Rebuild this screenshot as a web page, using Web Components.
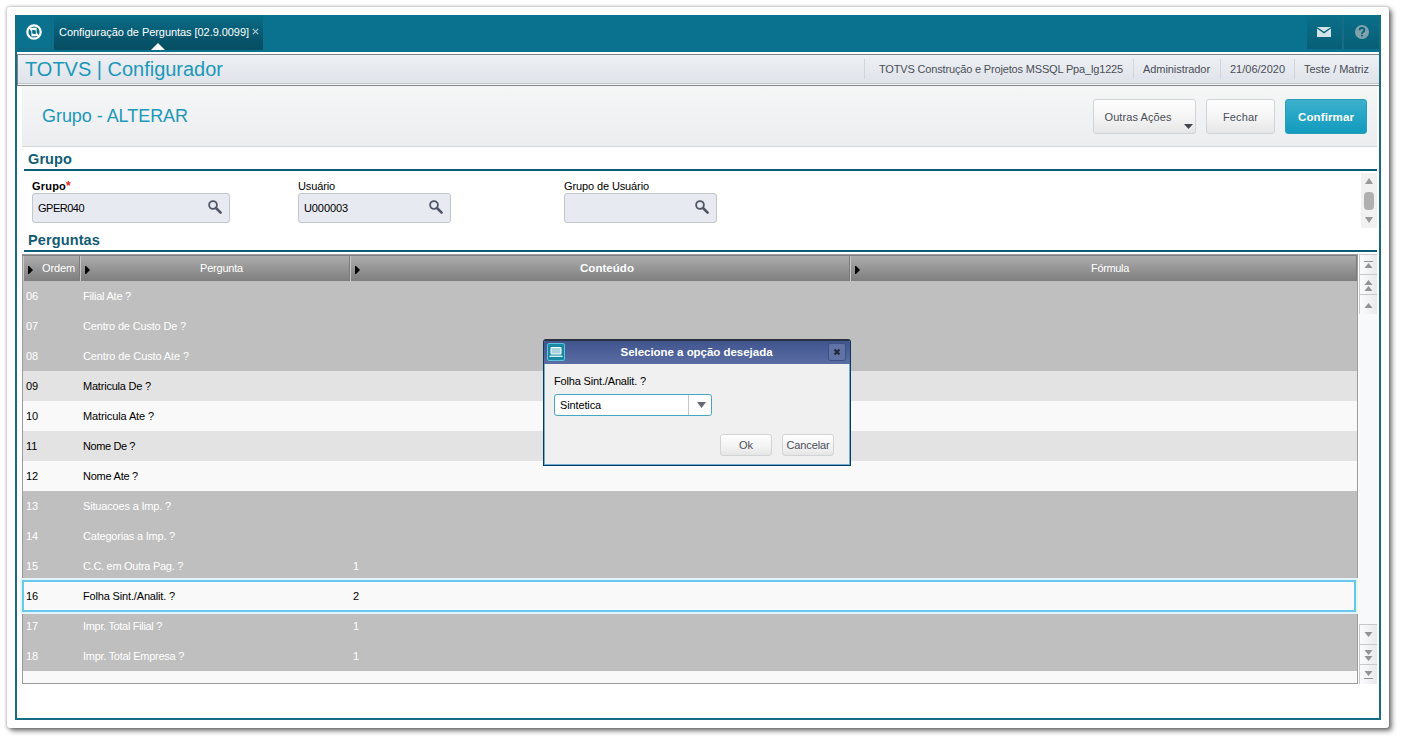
<!DOCTYPE html>
<html lang="pt-BR">
<head>
<meta charset="utf-8">
<title>TOTVS | Configurador</title>
<style>
    html, body {
        margin: 0;
        width: 1402px;
        height: 741px;
        overflow: hidden;
        background: #fff;
    }
    body {
        font: 11px/14px "Liberation Sans", Arial, sans-serif;
        color: #000;
    }
</style>
</head>
<body>
<app-window></app-window>

<script>
// -----------------------------------------
// 1. Screen data
// -----------------------------------------
const AppState = {
    session: [
        { text: 'TOTVS Construção e Projetos MSSQL Ppa_lg1225', run: 244, pad: 14, box: 269 },
        { text: 'Administrador', run: 67, pad: 9, box: 87 },
        { text: '21/06/2020', run: 55, pad: 9, box: 74 },
        { text: 'Teste / Matriz', run: 65, pad: 9, box: 85 }
    ],
    fields: [
        { label: 'Grupo', run: 34, value: 'GPER040', valueRun: 46, width: 198, required: true },
        { label: 'Usuário', run: 37, value: 'U000003', valueRun: 44, width: 153 },
        { label: 'Grupo de Usuário', run: 85, value: '', width: 153 }
    ],
    columns: [
        { label: 'Ordem', run: 33 },
        { label: 'Pergunta', run: 43 },
        { label: 'Conteúdo', run: 54, bold: true },
        { label: 'Fórmula', run: 38 }
    ],
    rows: [
        { order: '06', text: 'Filial Ate ?', run: 48, state: 'off' },
        { order: '07', text: 'Centro de Custo De ?', run: 103, state: 'off' },
        { order: '08', text: 'Centro de Custo Ate ?', run: 106, state: 'off' },
        { order: '09', text: 'Matricula De ?', run: 68, state: 'odd' },
        { order: '10', text: 'Matricula Ate ?', run: 71, state: 'even' },
        { order: '11', text: 'Nome De ?', run: 52, state: 'odd' },
        { order: '12', text: 'Nome Ate ?', run: 55, state: 'even' },
        { order: '13', text: 'Situacoes a Imp. ?', run: 88, state: 'off' },
        { order: '14', text: 'Categorias a Imp. ?', run: 92, state: 'off' },
        { order: '15', text: 'C.C. em Outra Pag. ?', run: 100, value: '1', state: 'off' },
        { order: '16', text: 'Folha Sint./Analit. ?', run: 92, value: '2', state: 'selected' },
        { order: '17', text: 'Impr. Total Filial ?', run: 79, value: '1', state: 'off' },
        { order: '18', text: 'Impr. Total Empresa ?', run: 101, value: '1', state: 'off' }
    ]
};

/** Attaches an open shadow root with the given markup. */
const render = (host, html) => {
    host.attachShadow({ mode: 'open' }).innerHTML = html;
};

// -----------------------------------------
// 2. Small parts
// -----------------------------------------

/** One line of text, tracked so that its run takes exactly `run` pixels. */
class TextRun extends HTMLElement {
    constructor() {
        super();
        render(this, `
            <style>
                :host { display: inline-block; white-space: nowrap; vertical-align: top; }
                span { display: inline-block; vertical-align: top; }
            </style>
            <span><slot></slot></span>
        `);
    }

    connectedCallback() {
        requestAnimationFrame(() => this.fit());
        this.fit();
    }

    fit() {
        const run = Number(this.getAttribute('run'));
        const span = this.shadowRoot.querySelector('span');
        span.style.letterSpacing = '0';
        const natural = span.getBoundingClientRect().width;
        const count = this.textContent.length;
        if (!run || !natural || !count) return;
        span.style.letterSpacing = `${(run - natural) / count}px`;
        this.style.width = `${run}px`;
    }
}

class UiButton extends HTMLElement {
    constructor() {
        super();
        render(this, `
            <style>
                :host {
                    display: flex;
                    align-items: center;
                    justify-content: center;
                    box-sizing: border-box;
                    border: 1px solid #d2d3d5;
                    border-radius: 3px;
                    background: linear-gradient(#fefefe, #f4f4f4 55%, #e6e6e7);
                    color: #4b4e57;
                    white-space: nowrap;
                }
                :host([primary]) {
                    border-color: #2a9dbb;
                    background: linear-gradient(#3cb0cd, #25a5c5 50%, #129bbd);
                    color: #fff;
                    font-size: 11.5px;
                    font-weight: bold;
                }
            </style>
            <slot></slot>
        `);
    }
}

class SearchField extends HTMLElement {
    connectedCallback() {
        const label = this.getAttribute('label');
        const required = this.hasAttribute('required');
        const value = this.getAttribute('value');
        render(this, `
            <style>
                :host { display: block; line-height: 14px; }
                .label { height: 14px; display: flex; }
                .label.required { font-weight: bold; }
                i { color: #e2231a; font-style: normal; font-size: 12px; }
                .box {
                    box-sizing: border-box;
                    height: 30px;
                    display: flex;
                    align-items: center;
                    justify-content: space-between;
                    padding: 0 7px 0 5px;
                    border: 1px solid #c3c6cb;
                    border-radius: 3px;
                    background: #e7eaf1;
                }
                svg { display: block; margin-bottom: 2px; }
            </style>
            <div class="label ${required ? 'required' : ''}"><text-run run="${this.getAttribute('run')}">${label}</text-run>${required ? '<i>*</i>' : ''}</div>
            <div class="box">
                <text-run run="${this.getAttribute('value-run')}">${value}</text-run>
                <svg width="14" height="14" viewBox="0 0 14 14" fill="none" stroke="#4f5665">
                    <circle cx="5" cy="5" r="3.9" stroke-width="1.8"/>
                    <path d="M8 8L12.6 12.6" stroke-width="2.6" stroke-linecap="round"/>
                </svg>
            </div>
        `);
    }
}

class SectionTitle extends HTMLElement {
    constructor() {
        super();
        render(this, `
            <style>
                :host {
                    display: block;
                    box-sizing: border-box;
                    margin-left: 2px;
                    padding-left: 4px;
                    border-bottom: 2px solid #0b5c74;
                    color: #115c74;
                    font-size: 14.5px;
                    font-weight: bold;
                    line-height: 18px;
                }
            </style>
            <slot></slot>
        `);
    }
}

// -----------------------------------------
// 3. Header bars
// -----------------------------------------
class TopBar extends HTMLElement {
    constructor() {
        super();
        render(this, `
            <style>
                :host {
                    display: flex;
                    height: 35px;
                    padding-bottom: 2px;
                    background: #0a728f;
                    color: #fff;
                }
                svg { display: block; }
                .home, .tool {
                    box-sizing: border-box;
                    height: 34px;
                    display: flex;
                    align-items: center;
                    justify-content: center;
                }
                .home { width: 35px; border-right: 1px solid #176781; border-bottom: 1px solid #176781; }
                .tab {
                    position: relative;
                    box-sizing: border-box;
                    width: 209px;
                    height: 35px;
                    margin-left: 2px;
                    padding: 10px 0 0 5px;
                    display: flex;
                    gap: 3px;
                    background: linear-gradient(#0a6e89, #06546b 70%, #064d61);
                }
                .close { margin-top: 3px; }
                /* pointer over the lower edge of the active tab */
                .mark { position: absolute; left: 97px; bottom: 0; }
                .tools { margin-left: auto; display: flex; gap: 1px; }
                .tool { width: 36px; padding-right: 2px; background: linear-gradient(#0a6f8a, #075e76); border-right: 1px solid #24677a; }
                .tool:last-child { width: 35px; padding-right: 0; border-right: 0; }
            </style>
            <div class="home">
                <svg width="16" height="16" viewBox="0 0 16 16">
                    <circle cx="8" cy="8" r="6.7" fill="none" stroke="#fff" stroke-width="2.2"/>
                    <path d="M2.5 3.8H10.6V8.6L13.5 12.2H5.4V7.4Z" fill="#fff"/>
                    <path d="M6.2 5.8L9.8 6.4V10.2L6.2 9.6Z" fill="#0a6c87"/>
                </svg>
            </div>
            <div class="tab">
                <text-run run="190">Configuração de Perguntas [02.9.0099]</text-run>
                <svg class="close" width="7" height="7" viewBox="0 0 7 7" stroke="#b4cdd4" stroke-width="1.1"><path d="M.8 .8L6.2 6.2M6.2 .8L.8 6.2"/></svg>
                <svg class="mark" width="14" height="7"><path d="M7 0L14 7H0Z" fill="#fff"/></svg>
            </div>
            <div class="tools">
                <div class="tool">
                    <svg width="14" height="10" viewBox="0 0 14 10">
                        <rect width="14" height="10" fill="#d3e3e7"/>
                        <path d="M0 .7L7 5.6L14 .7" fill="none" stroke="#0a647d" stroke-width="1.3"/>
                    </svg>
                </div>
                <div class="tool">
                    <svg width="14" height="14" viewBox="0 0 14 14">
                        <circle cx="7" cy="7" r="7" fill="#82a2ab"/>
                        <path d="M4.6 5.3C4.6 2.2 9.5 2.3 9.4 5.1C9.3 6.8 7 6.7 7 8.8M7 9.8V11.6" fill="none" stroke="#07627a" stroke-width="1.8"/>
                    </svg>
                </div>
            </div>
        `);
    }
}

class TitleBar extends HTMLElement {
    constructor() {
        super();
        const items = AppState.session.map(item => `
            <div class="item" style="width:${item.box}px;padding-left:${item.pad}px"><text-run run="${item.run}">${item.text}</text-run></div>`).join('');
        render(this, `
            <style>
                :host {
                    box-sizing: border-box;
                    display: flex;
                    justify-content: space-between;
                    height: 32px;
                    margin-top: 2px;
                    border: 1px solid #7f868b;
                    border-right: 0;
                    background: linear-gradient(#edf0f4, #dfe4ea 28px, #bfc4c9 28px, #bfc4c9 29px, #f7f8fa 29px);
                    color: #4b4e57;
                }
                .name { margin: 2px 0 0 7px; font-size: 20px; line-height: 24px; color: #1c98ba; }
                .session { display: flex; padding-top: 4px; }
                .item {
                    box-sizing: border-box;
                    height: 20px;
                    line-height: 20px;
                    border-left: 1px solid #d0d5db;
                }
            </style>
            <div class="name"><text-run run="198">TOTVS | Configurador</text-run></div>
            <div class="session">${items}</div>
        `);
    }
}

class ActionBar extends HTMLElement {
    constructor() {
        super();
        render(this, `
            <style>
                :host {
                    box-sizing: border-box;
                    display: flex;
                    justify-content: space-between;
                    height: 61px;
                    padding: 13px 10px 0 20px;
                    border-bottom: 1px solid #d6d7d8;
                    background: linear-gradient(#f5f7f7, #ebedef);
                }
                .name { margin-top: 6px; font-size: 18px; line-height: 22px; color: #1c98ba; }
                .buttons { display: flex; gap: 10px; }
                ui-button { height: 35px; }
                .more { width: 103px; position: relative; padding-right: 13px; }
                /* menu arrow in the button's lower corner */
                .more svg { position: absolute; right: 2px; bottom: 4px; }
            </style>
            <div class="name"><text-run run="146">Grupo - ALTERAR</text-run></div>
            <div class="buttons">
                <ui-button class="more"><text-run run="67">Outras Ações</text-run><svg width="9" height="5"><path d="M0 0H9L4.5 5Z" fill="#414552"/></svg></ui-button>
                <ui-button style="width:69px"><text-run run="35">Fechar</text-run></ui-button>
                <ui-button primary style="width:82px"><text-run run="56">Confirmar</text-run></ui-button>
            </div>
        `);
    }
}

// -----------------------------------------
// 4. Content
// -----------------------------------------
class GroupForm extends HTMLElement {
    constructor() {
        super();
        const fields = AppState.fields.map(f => `
            <search-field style="width:${f.width}px" label="${f.label}" run="${f.run}" value="${f.value}" value-run="${f.valueRun || 0}" ${f.required ? 'required' : ''}></search-field>`).join('');
        render(this, `
            <style>
                :host { display: flex; justify-content: space-between; height: 60px; }
                .fields { display: grid; grid-template-columns: 266px 266px 266px; padding: 8px 0 0 10px; align-content: start; }
                .scroll {
                    box-sizing: border-box;
                    width: 16px;
                    height: 55px;
                    margin-top: 2px;
                    padding: 5px 0;
                    display: flex;
                    flex-direction: column;
                    align-items: center;
                    justify-content: space-between;
                    background: #f1f1f2;
                }
                .thumb { width: 10px; height: 18px; border-radius: 4px; background: #b0b0b0; }
            </style>
            <div class="fields">${fields}</div>
            <div class="scroll">
                <svg width="8" height="6"><path d="M4 0L8 6H0Z" fill="#999"/></svg>
                <div class="thumb"></div>
                <svg width="8" height="6"><path d="M0 0H8L4 6Z" fill="#999"/></svg>
            </div>
        `);
    }
}

class QuestionGrid extends HTMLElement {
    constructor() {
        super();
        const head = AppState.columns.map(c => `
            <div class="th ${c.bold ? 'bold' : ''}"><svg width="5" height="8"><path d="M0 0H1L5 4L1 8H0Z" fill="#000"/></svg><span><text-run run="${c.run}">${c.label}</text-run></span></div>`).join('');
        const rows = AppState.rows.map(r => `
            <div class="tr ${r.state}"><div>${r.order}</div><div><text-run run="${r.run}">${r.text}</text-run></div><div>${r.value || ''}</div><div></div></div>`).join('');
        render(this, `
            <style>
                :host {
                    display: block;
                    box-sizing: border-box;
                    width: 1336px;
                    height: 430px;
                    border: 1px solid #999b9d;
                    background: #f9f9f9;
                }
                .thead, .tr { display: grid; grid-template-columns: 57px 270px 500px 507px; }
                .thead {
                    box-sizing: border-box;
                    height: 26px;
                    border-top: 1px solid #818181;
                    background: linear-gradient(#acacac, #7e7e7e);
                    color: #fff;
                }
                .th {
                    box-sizing: border-box;
                    display: flex;
                    align-items: center;
                    padding-left: 4px;
                    border-left: 1px solid #c6c6c6;
                    border-right: 1px solid #7b7b7b;
                }
                .th svg { flex: none; margin-top: 3px; }
                .th span { flex: 1; text-align: center; padding: 0 0 2px 4px; }
                .th:first-child span { padding-left: 5px; }
                .bold { font-size: 11.5px; font-weight: bold; }
                .bold span { padding-left: 5px; }
                .tr { height: 30px; line-height: 30px; }
                .tr div { padding-left: 3px; }
                .off { background: #bfbfbf; color: #fff; }
                .odd { background: #e3e3e3; }
                .even { background: #f9f9f9; }
                .selected {
                    position: relative;
                    margin-right: 2px;
                    background: #f9f9f9;
                    outline: 2px solid #67c9ea;
                    box-shadow: 0 0 0 3px #e4f5fb, inset 0 0 0 1px #d3f1fa;
                    outline-offset: -1px;
                }
            </style>
            <div class="thead">${head}</div>
            ${rows}
        `);
    }
}

/** Navigation strip at the right of the grid. */
class GridNav extends HTMLElement {
    constructor() {
        super();
        const up = y => `<path d="M9.5 ${y}L13.5 ${y + 5}H5.5Z"/>`;
        const down = y => `<path d="M5.5 ${y}H13.5L9.5 ${y + 5}Z"/>`;
        const key = shapes => `<div class="key"><svg width="18" height="19" fill="#929395">${shapes}</svg></div>`;
        render(this, `
            <style>
                :host {
                    display: flex;
                    flex-direction: column;
                    justify-content: space-between;
                    width: 18px;
                    height: 430px;
                    margin-left: 1px;
                    background: #f8f9fb;
                }
                .key {
                    box-sizing: border-box;
                    height: 20px;
                    border-top: 1px solid #c8c9cc;
                    border-left: 1px solid #c8c9cc;
                    background: linear-gradient(90deg, #fbfbfc, #e9eaec);
                }
                svg { display: block; margin-left: -1px; }
            </style>
            <div>
                ${key('<path d="M5 6h9v1h-9z"/>' + up(8))}
                ${key(up(5) + up(11))}
                ${key(up(8))}
            </div>
            <div>
                ${key(down(7))}
                ${key(down(5) + down(11))}
                ${key(down(6) + '<path d="M5 13h9v1h-9z"/>')}
            </div>
        `);
    }
}

class OptionDialog extends HTMLElement {
    constructor() {
        super();
        render(this, `
            <style>
                :host {
                    display: block;
                    box-sizing: border-box;
                    width: 308px;
                    height: 127px;
                    border: 1px solid #063a63;
                    border-top: 2px solid #2a3142;
                    border-radius: 3px 3px 1px 1px;
                    background: #f0f0f0;
                    box-shadow: inset 1px 0 #6fb0d8, inset -1px 0 #6fb0d8, inset 0 -1px #6fb0d8;
                    overflow: hidden;
                }
                header {
                    box-sizing: border-box;
                    height: 23px;
                    display: flex;
                    align-items: center;
                    justify-content: space-between;
                    padding: 0 4px 1px 3px;
                    background: linear-gradient(#40548e, #5a6da3);
                    color: #fff;
                    font-size: 11.5px;
                    font-weight: bold;
                }
                header svg { display: block; }
                .content { padding: 10px 16px 0 10px; }
                .combo {
                    box-sizing: border-box;
                    width: 158px;
                    height: 22px;
                    margin-top: 6px;
                    display: flex;
                    align-items: center;
                    border: 1px solid #45a7c4;
                    border-radius: 3px;
                    background: #fff;
                }
                .value { flex: 1; padding-left: 5px; }
                .arrow {
                    box-sizing: border-box;
                    width: 23px;
                    height: 20px;
                    padding: 7px 0 0 8px;
                    border-left: 1px solid #c3c6ca;
                }
                .arrow svg { display: block; }
                .buttons { display: flex; justify-content: flex-end; gap: 10px; margin-top: 18px; }
                ui-button { width: 52px; height: 22px; }
            </style>
            <header>
                <svg width="18" height="18" viewBox="0 0 18 18">
                    <rect x=".5" y=".5" width="17" height="17" rx="1.5" fill="#1788a5" stroke="#5fc2d8"/>
                    <path d="M4 4.5H14V11H4Z" fill="#a9d3dc" stroke="#fff"/>
                    <path d="M3 12.5H15L16 14H2Z" fill="#d2eef3"/>
                </svg>
                <text-run run="152">Selecione a opção desejada</text-run>
                <svg width="18" height="18" viewBox="0 0 18 18">
                    <rect x=".5" y=".5" width="17" height="17" rx="2" fill="#6173a6" stroke="#3f4f82"/>
                    <path d="M6.5 6.5L11.5 11.5M11.5 6.5L6.5 11.5" stroke="#20263c" stroke-width="2.2"/>
                </svg>
            </header>
            <div class="content">
                <text-run run="92">Folha Sint./Analit. ?</text-run>
                <div class="combo">
                    <div class="value"><text-run run="41">Sintetica</text-run></div>
                    <div class="arrow"><svg width="9" height="6"><path d="M0 0H9L4.5 6Z" fill="#666a76"/></svg></div>
                </div>
                <div class="buttons">
                    <ui-button><text-run run="14">Ok</text-run></ui-button>
                    <ui-button><text-run run="43">Cancelar</text-run></ui-button>
                </div>
            </div>
        `);
    }
}

// -----------------------------------------
// 5. Window
// -----------------------------------------
class AppWindow extends HTMLElement {
    constructor() {
        super();
        render(this, `
            <style>
                :host { display: block; padding: 7px 13px 13px 7px; }
                .paper {
                    height: 705px;
                    padding: 8px;
                    border-radius: 3px;
                    background: #fff;
                    box-shadow: 0 0 3px 1px rgba(0, 0, 0, .22), 3px 3px 5px rgba(0, 0, 0, .5);
                }
                .frame {
                    box-sizing: border-box;
                    height: 705px;
                    border: 2px solid #176b83;
                    border-top-width: 0;
                    background: #fff;
                }
                .body { padding: 0 2px 0 5px; }
                .first { padding-top: 3px; height: 24px; }
                .second { padding-top: 0; height: 21px; }
                .grid { display: flex; margin-top: 2px; }
                option-dialog { position: absolute; left: 543px; top: 339px; }
            </style>
            <div class="paper">
                <div class="frame">
                    <top-bar></top-bar>
                    <title-bar></title-bar>
                    <div class="body">
                        <action-bar></action-bar>
                        <section-title class="first"><text-run run="44">Grupo</text-run></section-title>
                        <group-form></group-form>
                        <section-title class="second"><text-run run="72">Perguntas</text-run></section-title>
                        <div class="grid">
                            <question-grid></question-grid>
                            <grid-nav></grid-nav>
                        </div>
                    </div>
                </div>
            </div>
            <option-dialog></option-dialog>
        `);
    }
}

customElements.define('text-run', TextRun);
customElements.define('ui-button', UiButton);
customElements.define('search-field', SearchField);
customElements.define('section-title', SectionTitle);
customElements.define('top-bar', TopBar);
customElements.define('title-bar', TitleBar);
customElements.define('action-bar', ActionBar);
customElements.define('group-form', GroupForm);
customElements.define('question-grid', QuestionGrid);
customElements.define('grid-nav', GridNav);
customElements.define('option-dialog', OptionDialog);
customElements.define('app-window', AppWindow);
</script>
</body>
</html>
